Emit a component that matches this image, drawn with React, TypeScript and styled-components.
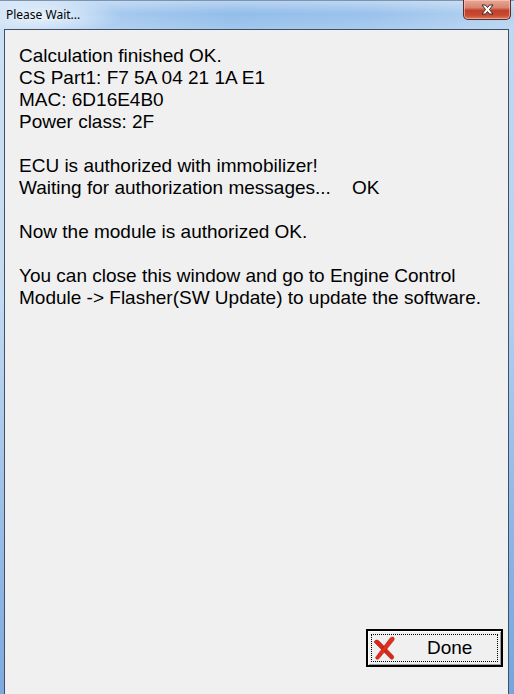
import React from 'react';
import styled, { createGlobalStyle } from 'styled-components';

const Global = createGlobalStyle`
  html, body { margin: 0; padding: 0; background: #f0f0f0; }
  body { width: 514px; height: 694px; overflow: hidden; }
`;

const Window = styled.div`
  width: 514px;
  height: 694px;
  display: flex;
  flex-direction: column;
  background: linear-gradient(90deg, #c4dbf2 0%, #a9cbef 18%, #92bdea 45%, #9ac2ec 72%, #b4d2f0 100%);
`;

const TitleBar = styled.div`
  height: 29px;
  flex: none;
  display: flex;
  align-items: flex-start;
  justify-content: space-between;
  padding: 0 3px 0 6px;
  border-top: 1px solid #7e93ad;
  box-sizing: border-box;
  background:
    radial-gradient(ellipse 80px 18px at 42px 15px, rgba(240, 247, 255, 0.85), rgba(240, 247, 255, 0) 100%),
    linear-gradient(180deg, rgba(255, 255, 255, 0.35) 0%, rgba(255, 255, 255, 0) 45%, rgba(255, 255, 255, 0.15) 100%);
`;

const Title = styled.div`
  font-family: 'Noto Sans', 'DejaVu Sans', sans-serif;
  font-size: 12px;
  line-height: 16px;
  color: #000;
  margin-top: 6px;
`;

const CloseButton = styled.div`
  width: 48px;
  height: 20px;
  margin-top: -1px;
  box-sizing: border-box;
  border: 1px solid #5b2b26;
  border-top: none;
  border-radius: 0 0 5px 5px;
  background: linear-gradient(180deg, #e8a898 0%, #d88470 40%, #c2402a 55%, #c84a32 80%, #d87a5c 100%);
  box-shadow: inset 0 0 0 1px rgba(255, 210, 200, 0.55);
  display: flex;
  align-items: center;
  justify-content: center;
`;

const Body = styled.div`
  flex: 1;
  display: flex;
  padding: 0 5px 0 4px;
  min-height: 0;
  background:
    linear-gradient(180deg, rgba(255, 255, 255, 0.15) 0%, rgba(150, 200, 245, 0) 40%, rgba(40, 110, 200, 0.35) 85%, rgba(40, 110, 200, 0.45) 100%);
`;

const Client = styled.div`
  flex: 1;
  display: flex;
  flex-direction: column;
  background: #f0f0f0;
  border: 1px solid #3e4f66;
  border-bottom: none;
`;

const Message = styled.div`
  padding: 15px 10px 0 14px;
  font-family: 'Liberation Sans', Arial, sans-serif;
  font-size: 19px;
  line-height: 22px;
  color: #000;
  white-space: pre;
`;

const Footer = styled.div`
  margin-top: auto;
  display: flex;
  justify-content: flex-end;
  padding: 0 5px 27px 0;
`;

const Button = styled.button`
  width: 137px;
  height: 38px;
  box-sizing: border-box;
  border: 2px solid #000;
  background: #f0f0f0;
  box-shadow: inset 1px 1px 0 #fff, inset -1px -1px 0 #a0a0a0;
  outline: 1px dotted #000;
  outline-offset: -6px;
  padding: 0 0 0 5px;
  display: flex;
  align-items: center;
  font-family: 'Liberation Sans', Arial, sans-serif;
  font-size: 19px;
  color: #000;
  cursor: default;
`;

const ButtonLabel = styled.span`
  margin-left: 32px;
  line-height: 22px;
`;

const CloseGlyph = () => (
  <svg width="15" height="11" viewBox="0 0 15 11">
    <path
      d="M2 1 L5.5 1 L7.5 3.5 L9.5 1 L13 1 L9.5 5.5 L13 10 L9.5 10 L7.5 7.5 L5.5 10 L2 10 L5.5 5.5 Z"
      fill="#ffffff"
      stroke="#3a2a2a"
      strokeWidth="1"
      strokeLinejoin="round"
    />
  </svg>
);

const RedX = () => (
  <svg width="22" height="25" viewBox="0 0 22 25">
    <path
      d="M1 6 C2.5 3.5 4.5 3.5 6.5 5.5 L20.5 20 C21.3 22 19.8 24 17.8 23 L5 10 C3 8 2 7 1 6 Z"
      fill="#d8281c"
      stroke="#a0150c"
      strokeWidth="0.5"
    />
    <path
      d="M19.5 1 C21.3 1 22 3 20.3 5 L6.5 22 C5 24 2.8 23.5 2.5 21.5 L16 3.5 C17 2 18 1 19.5 1 Z"
      fill="#e0301f"
      stroke="#a0150c"
      strokeWidth="0.5"
    />
  </svg>
);

const lines = [
  'Calculation finished OK.',
  'CS Part1: F7 5A 04 21 1A E1',
  'MAC: 6D16E4B0',
  'Power class: 2F',
  '',
  'ECU is authorized with immobilizer!',
  'Waiting for authorization messages...    OK',
  '',
  'Now the module is authorized OK.',
  '',
  'You can close this window and go to Engine Control',
  'Module -> Flasher(SW Update) to update the software.',
];

export default function App() {
  return (
    <>
      <Global />
      <Window>
        <TitleBar>
          <Title>Please Wait...</Title>
          <CloseButton>
            <CloseGlyph />
          </CloseButton>
        </TitleBar>
        <Body>
          <Client>
            <Message>{lines.join('\n')}</Message>
            <Footer>
              <Button>
                <RedX />
                <ButtonLabel>Done</ButtonLabel>
              </Button>
            </Footer>
          </Client>
        </Body>
      </Window>
    </>
  );
}
